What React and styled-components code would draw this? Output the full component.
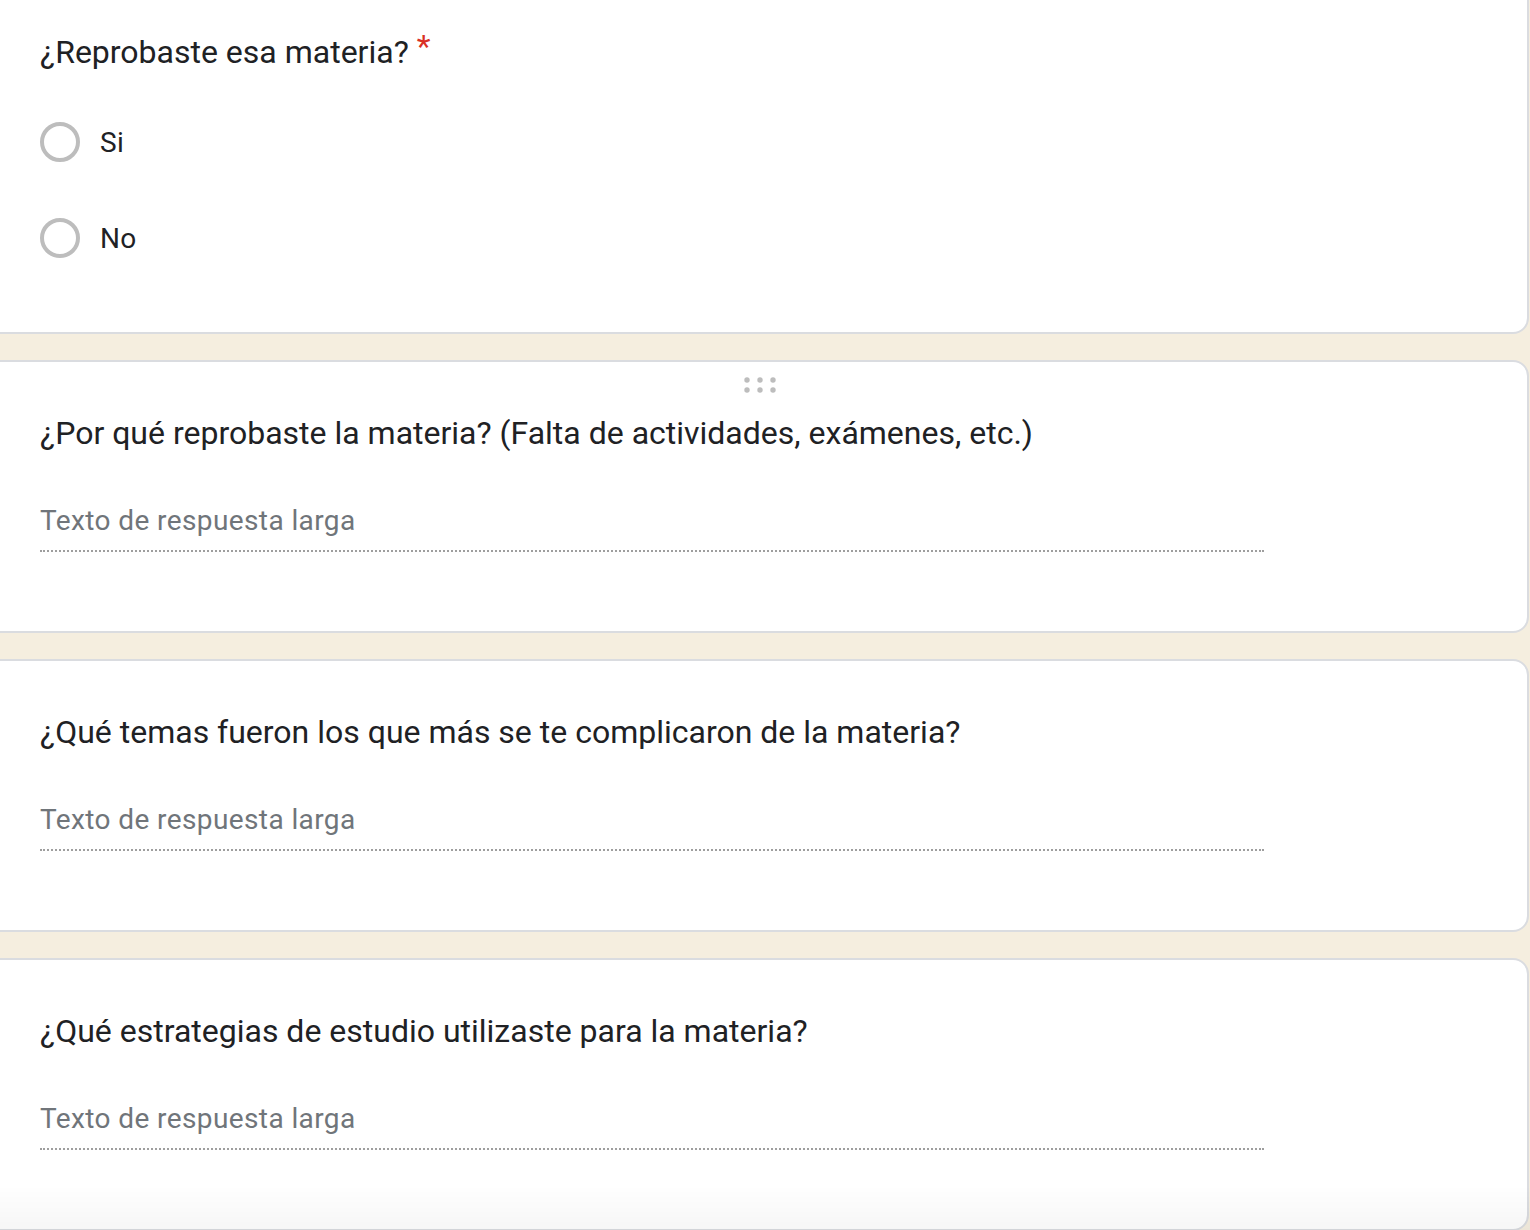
import React from "react";
import styled, { createGlobalStyle } from "styled-components";

const GlobalStyle = createGlobalStyle`
  html, body {
    margin: 0;
    padding: 0;
    background: #f5eedf;
    overflow: hidden;
  }
  body {
    font-family: Roboto, "Liberation Sans", Arial, sans-serif;
    color: #202124;
  }
`;

const Page = styled.main`
  display: flex;
  flex-direction: column;
  gap: 26px;
  width: 1544px;
  margin: -21px 0 0 -15px;
`;

const Card = styled.section`
  position: relative;
  box-sizing: border-box;
  background: #ffffff;
  border: 2px solid #dadce0;
  border-radius: 16px;
  padding: ${(p) => p.$top}px 53px ${(p) => p.$bottom}px;
`;

const DragHandle = styled.svg`
  position: absolute;
  top: 15px;
  left: 50%;
  margin-left: -13px;
  width: 32px;
  height: 16px;
  display: block;
`;

const Question = styled.h2`
  margin: 0;
  font-size: 32px;
  line-height: 48px;
  font-weight: 400;
  color: #202124;
  letter-spacing: 0;
`;

const Required = styled.span`
  color: #d93025;
  padding-left: 8px;
  vertical-align: 6px;
  line-height: 1;
`;

const Options = styled.div`
  display: flex;
  flex-direction: column;
  margin-top: 18px;
`;

const OptionRow = styled.label`
  display: flex;
  align-items: center;
  gap: 20px;
  height: 96px;
  font-size: 28px;
  letter-spacing: 0.4px;
  color: #202124;
`;

const Radio = styled.span`
  box-sizing: border-box;
  width: 40px;
  height: 40px;
  border-radius: 50%;
  border: 4px solid #bdbdbd;
  flex: none;
`;

const LongAnswer = styled.div`
  margin-top: 44px;
  width: 1224px;
  padding-bottom: 9px;
  border-bottom: 2px dotted #9e9e9e;
  font-size: 28px;
  line-height: 40px;
  letter-spacing: 0.4px;
  color: #70757a;
`;

const Fade = styled.div`
  position: fixed;
  left: 0;
  right: 0;
  bottom: 0;
  height: 45px;
  pointer-events: none;
  background: linear-gradient(to bottom, rgba(0, 0, 0, 0), rgba(0, 0, 0, 0.035));
`;

const Dots = () => (
  <DragHandle viewBox="0 0 32 16" aria-hidden="true">
    {[3, 16, 29].map((x) =>
      [3, 13].map((y) => <circle key={`${x}-${y}`} cx={x} cy={y} r="2.7" fill="#bdbdbd" />)
    )}
  </DragHandle>
);

const textQuestions = [
  { text: "¿Por qué reprobaste la materia? (Falta de actividades, exámenes, etc.)", handle: true },
  { text: "¿Qué temas fueron los que más se te complicaron de la materia?" },
  { text: "¿Qué estrategias de estudio utilizaste para la materia?" },
];

export default function App() {
  return (
    <>
      <GlobalStyle />
      <Page>
        <Card $top={47} $bottom={46}>
          <Question>
            ¿Reprobaste esa materia?<Required>*</Required>
          </Question>
          <Options>
            {["Si", "No"].map((o) => (
              <OptionRow key={o}>
                <Radio />
                {o}
              </OptionRow>
            ))}
          </Options>
        </Card>
        {textQuestions.map((q) => (
          <Card key={q.text} $top={47} $bottom={79}>
            {q.handle && <Dots />}
            <Question>{q.text}</Question>
            <LongAnswer>Texto de respuesta larga</LongAnswer>
          </Card>
        ))}
      </Page>
      <Fade />
    </>
  );
}
